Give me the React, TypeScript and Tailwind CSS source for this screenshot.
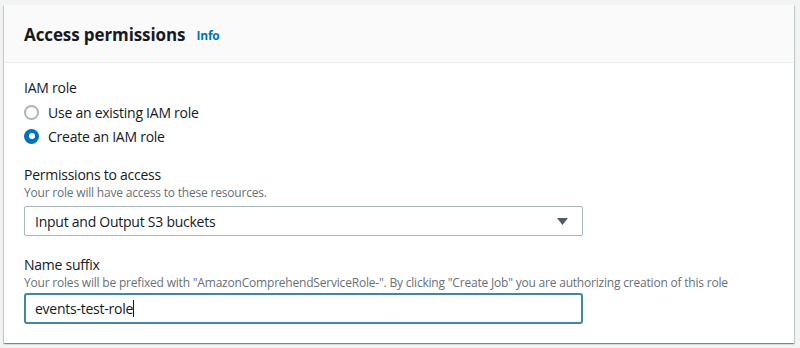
function Radio({ checked, label }: { checked?: boolean; label: string }) {
  return (
    <label className="flex items-center gap-[9px] h-6">
      {checked ? (
        <span className="w-[15px] h-[15px] rounded-full bg-[#0073bb] flex items-center justify-center">
          <span className="w-[6px] h-[6px] rounded-full bg-white" />
        </span>
      ) : (
        <span className="w-[15px] h-[15px] rounded-full border-2 border-[#aab7b8] bg-white" />
      )}
      <span className="text-[14px] tracking-[-0.25px] text-[#16191f]">{label}</span>
    </label>
  )
}

export default function App() {
  return (
    <div
      className="w-[800px] h-[348px] bg-[#f2f3f3] pt-[5px] pl-[4px] pr-[6px]"
      style={{ fontFamily: '"Open Sans", "Noto Sans", sans-serif' }}
    >
      <div className="bg-white shadow-[0_1px_1px_0_rgba(0,28,36,0.3),1px_1px_1px_0_rgba(0,28,36,0.15),-1px_1px_1px_0_rgba(0,28,36,0.15)] h-[338px]">
        <div className="h-[58px] bg-[#fafafa] border-b border-[#eaeded] flex items-center px-5 pt-[3px]">
          <h2 className="text-[17px] font-bold text-[#16191f] tracking-[-0.1px]">Access permissions</h2>
          <a className="ml-[11px] mt-[2px] text-[12px] font-bold tracking-[-0.2px] text-[#0073bb]">Info</a>
        </div>

        <div className="px-5 pt-[15px] tracking-[-0.25px]">
          <div className="text-[14px] text-[#16191f] leading-[20px]">IAM role</div>
          <div className="mt-[2px] flex flex-col">
            <Radio label="Use an existing IAM role" />
            <Radio checked label="Create an IAM role" />
          </div>

          <div className="mt-[17px] text-[14px] text-[#16191f] leading-[20px]">Permissions to access</div>
          <div className="text-[12px] tracking-[-0.2px] text-[#687078] leading-[16px]">Your role will have access to these resources.</div>
          <div className="mt-[5px] w-[559px] h-[30px] border border-[#aab7b8] rounded-[2px] flex items-center justify-between pl-[10px] pr-[14px]">
            <span className="text-[14px] text-[#16191f]">Input and Output S3 buckets</span>
            <svg width="11" height="7" viewBox="0 0 11 7">
              <path d="M0 0h11L5.5 7z" fill="#545b64" />
            </svg>
          </div>

          <div className="mt-[19px] text-[14px] text-[#16191f] leading-[20px]">Name suffix</div>
          <div className="text-[12px] tracking-[-0.2px] text-[#687078] leading-[16px]">
            Your roles will be prefixed with "AmazonComprehendServiceRole-". By clicking "Create Job" you are authorizing creation of this role
          </div>
          <div className="mt-[2px] w-[559px] h-[31px] border-2 border-[#3b8b9b] rounded-[3px] flex items-center pl-[9px]">
            <span className="text-[14px] text-[#16191f]">events-test-role</span>
            <span className="w-px h-[17px] bg-[#16191f]" />
          </div>
        </div>
      </div>
    </div>
  )
}
